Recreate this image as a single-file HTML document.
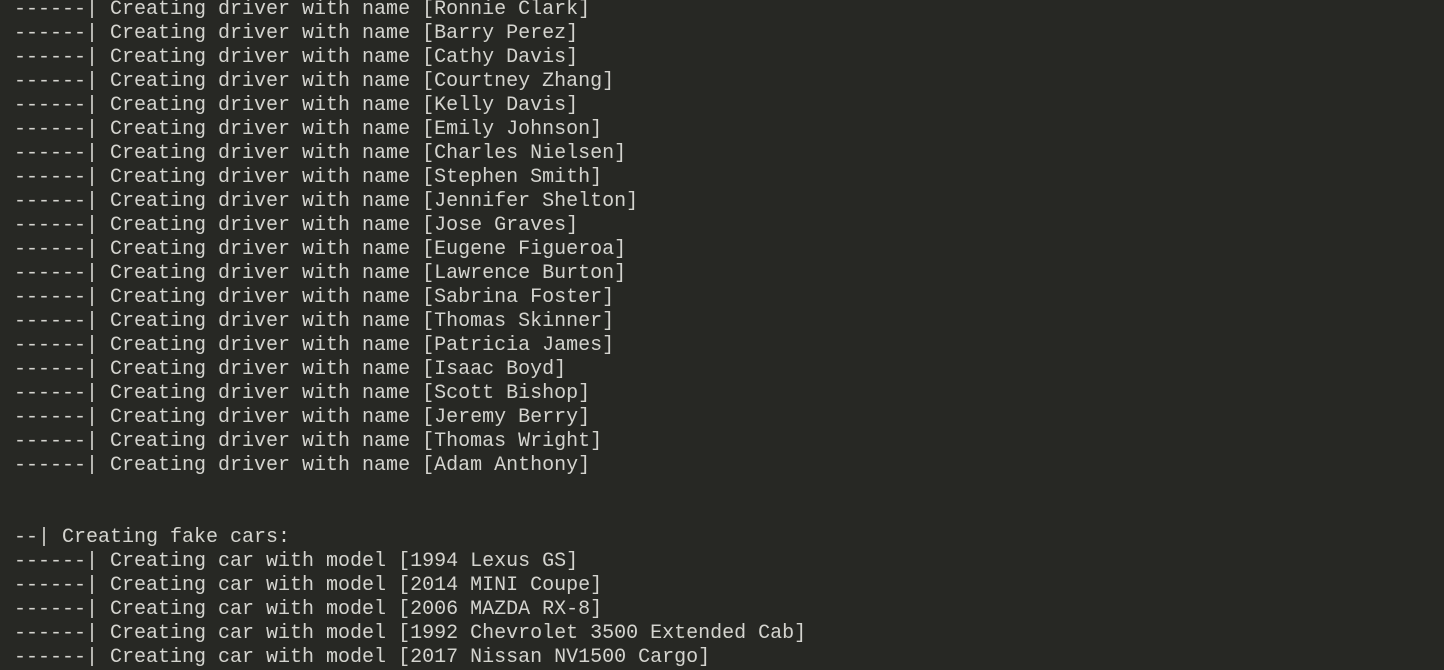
<!DOCTYPE html>
<html><head><meta charset="utf-8"><style>
html,body{margin:0;padding:0;background:#272824;width:1444px;height:670px;overflow:hidden}
pre{margin:0;position:absolute;left:14px;top:-2px;font-family:"Liberation Mono",monospace;font-size:20px;line-height:24px;color:#d4d4cf;white-space:pre}
</style></head><body><pre>------| Creating driver with name [Ronnie Clark]
------| Creating driver with name [Barry Perez]
------| Creating driver with name [Cathy Davis]
------| Creating driver with name [Courtney Zhang]
------| Creating driver with name [Kelly Davis]
------| Creating driver with name [Emily Johnson]
------| Creating driver with name [Charles Nielsen]
------| Creating driver with name [Stephen Smith]
------| Creating driver with name [Jennifer Shelton]
------| Creating driver with name [Jose Graves]
------| Creating driver with name [Eugene Figueroa]
------| Creating driver with name [Lawrence Burton]
------| Creating driver with name [Sabrina Foster]
------| Creating driver with name [Thomas Skinner]
------| Creating driver with name [Patricia James]
------| Creating driver with name [Isaac Boyd]
------| Creating driver with name [Scott Bishop]
------| Creating driver with name [Jeremy Berry]
------| Creating driver with name [Thomas Wright]
------| Creating driver with name [Adam Anthony]


--| Creating fake cars:
------| Creating car with model [1994 Lexus GS]
------| Creating car with model [2014 MINI Coupe]
------| Creating car with model [2006 MAZDA RX-8]
------| Creating car with model [1992 Chevrolet 3500 Extended Cab]
------| Creating car with model [2017 Nissan NV1500 Cargo]</pre></body></html>
